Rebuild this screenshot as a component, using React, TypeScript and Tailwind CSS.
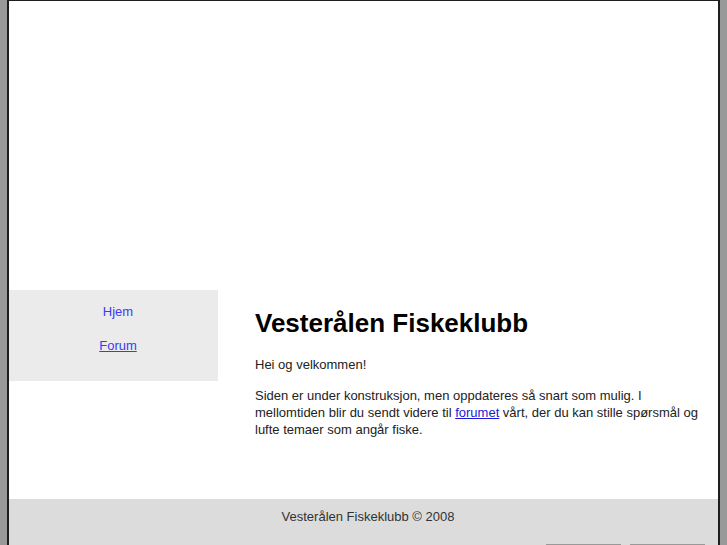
import React from 'react';

export default function App() {
  return (
    <div className="min-h-screen bg-[#999999] font-['Liberation_Sans',Arial,sans-serif]">
      <div className="mx-auto w-[713px] min-h-[545px] border-x-2 border-t border-[#1e1e1e] bg-white flex flex-col">
        {/* header (image missing) */}
        <div className="h-[289px]" />

        <div className="flex flex-1">
          <div className="w-[209px] self-start h-[91px] bg-[#ebebeb] flex flex-col items-center pl-[9px] pt-[13px] gap-[17px] text-[13px] leading-[17px]">
            <a href="#" className="text-[#3b3bf5] no-underline">Hjem</a>
            <a href="#" className="text-[#3b3bf5] underline">Forum</a>
          </div>

          <div className="flex-1 pl-[37px] pr-[14px] pt-[18px] pb-[60px] text-[13px] leading-[17px] text-[#222]">
            <h1 className="text-[26px] leading-[30px] font-bold text-black">Vesterålen Fiskeklubb</h1>
            <p className="mt-[18px]">Hei og velkommen!</p>
            <p className="mt-[14px]">
              Siden er under konstruksjon, men oppdateres så snart som mulig. I mellomtiden blir du sendt videre til{' '}
              <a href="#" className="text-[#1a1ad9] underline">forumet</a> vårt, der du kan stille spørsmål og lufte temaer som angår fiske.
            </p>
          </div>
        </div>

        <div className="bg-[#dcdcdc] h-[46px] pt-[9px] text-[13px] leading-[17px] text-[#333] text-center overflow-hidden">
          <div className="pl-[9px]">Vesterålen Fiskeklubb © 2008</div>
          <div className="flex justify-end gap-[9px] pr-[13px] mt-[19px]">
            <div className="w-[75px] h-[15px] flex border border-[#999]">
              <div className="w-[32px] bg-white" />
              <div className="flex-1 bg-[#a9c0cc]" />
            </div>
            <div className="w-[75px] h-[15px] flex border border-[#999]">
              <div className="w-[32px] bg-white" />
              <div className="flex-1 bg-[#f6c765]" />
            </div>
          </div>
        </div>
      </div>
    </div>
  );
}
